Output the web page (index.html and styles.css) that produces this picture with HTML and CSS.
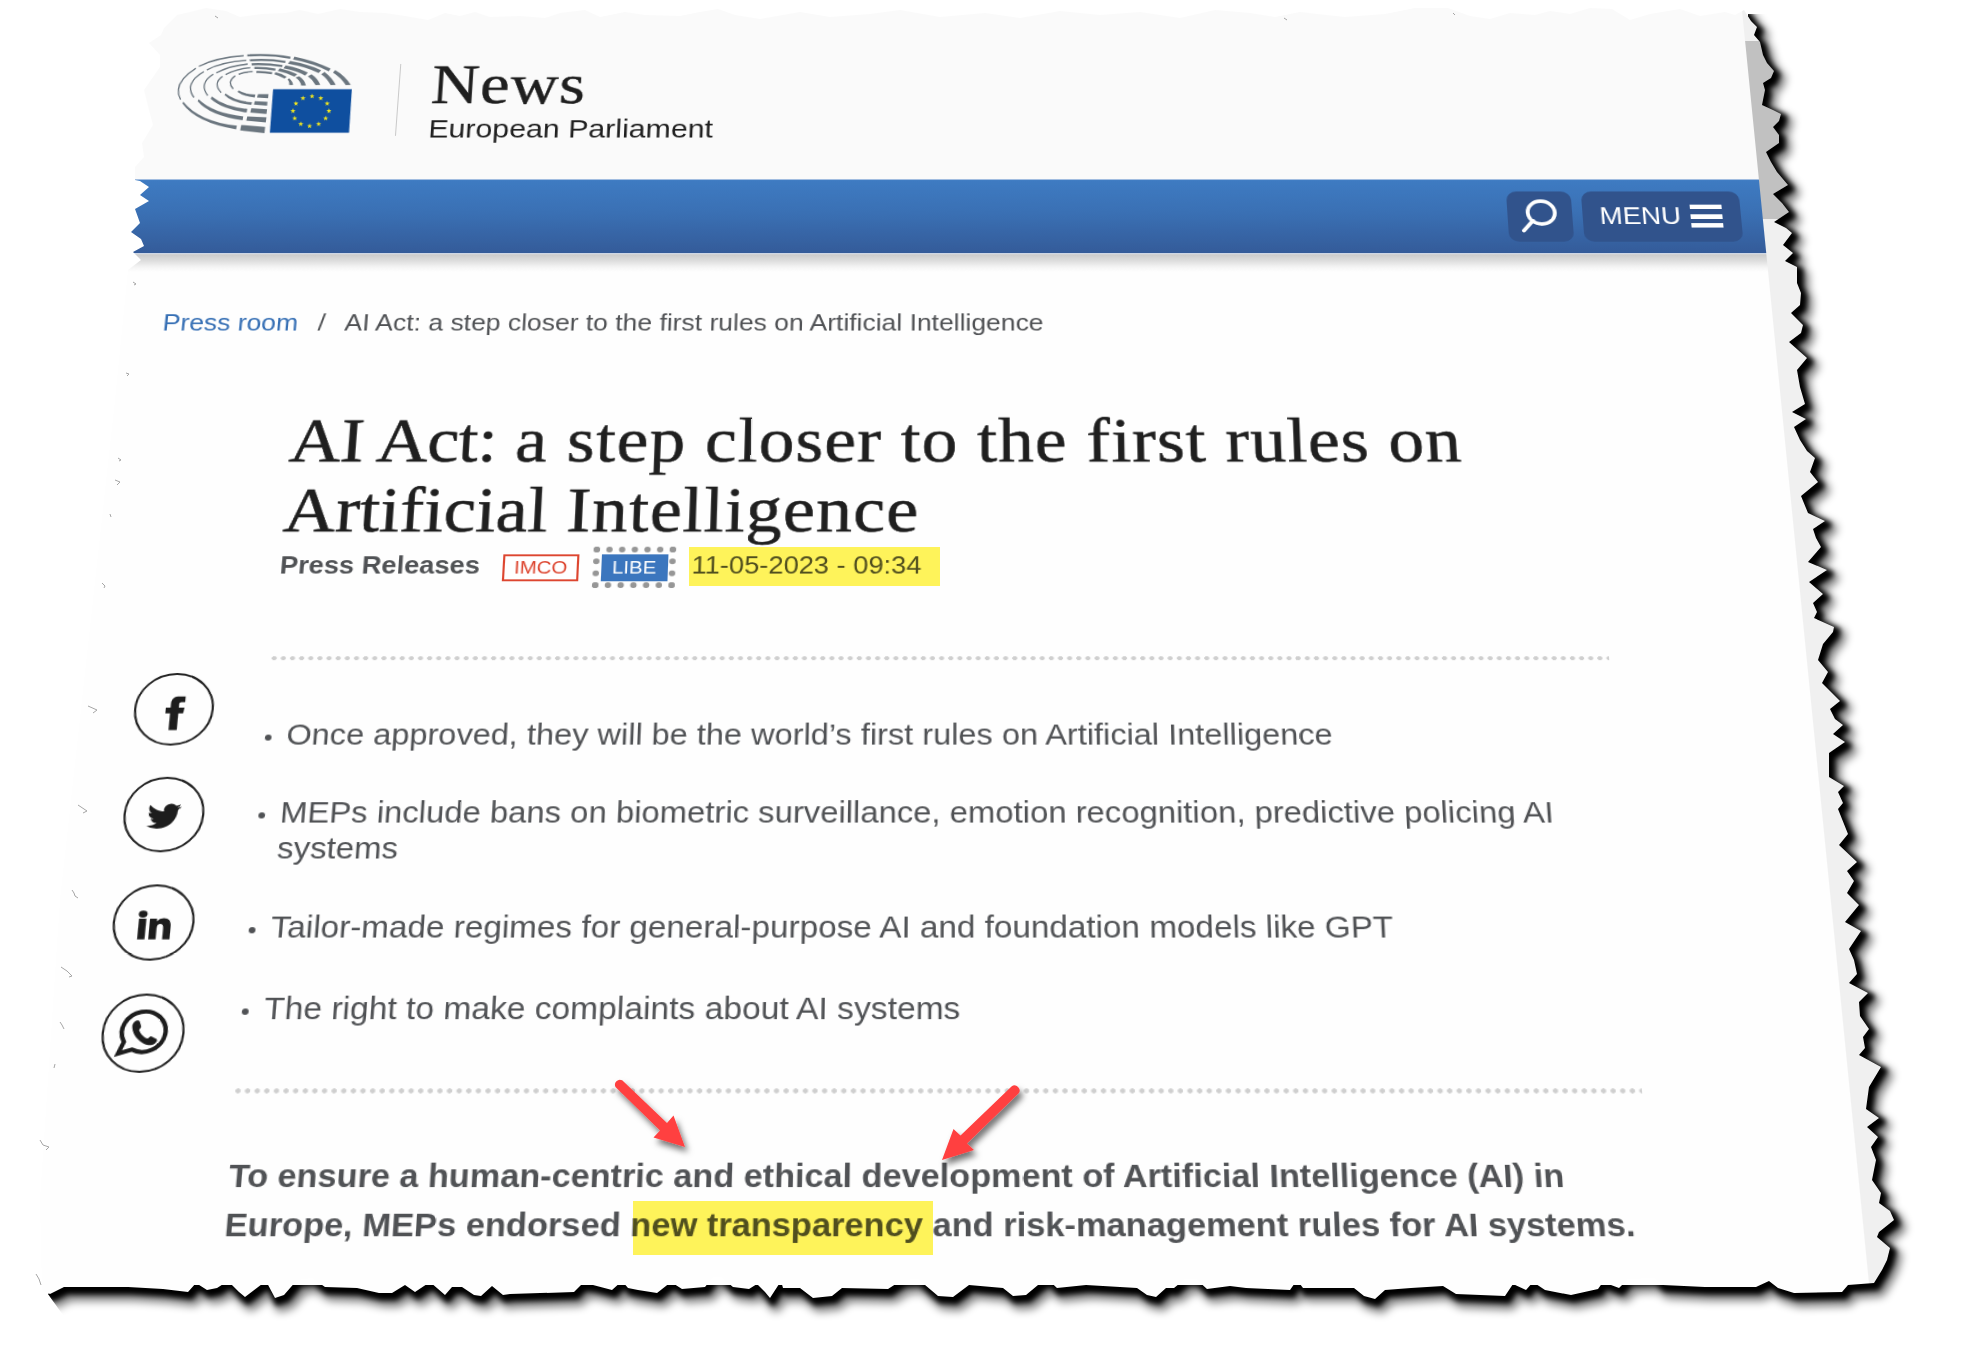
FILE: index.html
```html
<!DOCTYPE html>
<html lang="en">
<head>
<meta charset="utf-8">
<title>AI Act: a step closer to the first rules on Artificial Intelligence</title>
<link rel="stylesheet" href="styles.css">
</head>
<body>
<div class="stage">

<!-- torn paper outline and the shadow it casts -->
<svg class="torn" width="1965" height="1353" viewBox="0 0 1965 1353" aria-hidden="true">
  <defs>
    <path id="outline" d="M177,15L190,12 206,8 226,11 240,17 262,14 285,13 300,10 318,14 340,9 360,12 385,13 405,16 428,20 445,13 460,16 475,12 490,17 520,16 545,18 560,13 585,10 600,17 625,12 645,15 680,16 700,12 718,9 735,15 760,19 800,12 830,17 870,14 900,10 940,17 985,13 1020,18 1060,11 1100,15 1140,12 1180,18 1215,10 1250,13 1275,17 1300,12 1345,17 1385,14 1415,8 1448,8 1470,16 1490,19 1510,13 1535,15 1550,11 1570,14 1590,8 1612,9 1630,20 1650,14 1680,9 1700,16 1725,12 1735,15 1744,10 1751,21 1757,27 1754,35 1760,42 1763,55 1767,63 1774,71 1771,78 1763,83 1765,90 1762,105 1773,110 1781,114 1779,121 1773,127 1779,135 1779,143 1766,152 1771,162 1777,172 1788,185 1773,194 1782,203 1789,212 1774,222 1786,228 1792,233 1783,245 1793,253 1785,261 1797,267 1797,283 1801,293 1800,305 1791,313 1803,325 1801,333 1789,342 1798,350 1807,358 1797,370 1800,387 1805,404 1792,412 1806,419 1794,427 1800,440 1807,451 1815,458 1810,472 1818,482 1801,496 1808,513 1825,521 1813,529 1816,538 1821,547 1808,562 1827,570 1809,582 1823,594 1813,603 1817,612 1814,618 1834,627 1833,632 1823,644 1818,660 1828,672 1822,683 1840,701 1830,709 1835,719 1843,725 1833,734 1845,742 1829,753 1829,777 1844,786 1838,792 1843,803 1838,809 1848,834 1839,845 1857,862 1847,871 1854,881 1847,893 1859,905 1845,922 1861,931 1849,949 1854,960 1857,974 1849,983 1868,993 1859,1002 1860,1016 1869,1029 1863,1037 1865,1048 1859,1055 1881,1067 1869,1087 1866,1109 1879,1118 1867,1127 1878,1137 1871,1147 1876,1160 1872,1180 1881,1193 1879,1203 1890,1211 1894,1220 1879,1232 1877,1237 1890,1248 1887,1260 1882,1270 1874,1283 1848,1285 1842,1292 1794,1293 1778,1288 1769,1281 1756,1287 1705,1287 1663,1285 1654,1278 1628,1279 1619,1288 1603,1282 1598,1289 1571,1295 1545,1290 1533,1282 1526,1290 1513,1284 1505,1296 1456,1294 1443,1286 1411,1288 1385,1290 1375,1299 1364,1296 1354,1288 1303,1288 1297,1280 1290,1290 1246,1288 1230,1286 1207,1289 1196,1279 1185,1279 1174,1288 1166,1288 1156,1297 1147,1295 1137,1288 1086,1285 1057,1288 1047,1279 1038,1285 1026,1295 1013,1296 1003,1288 969,1285 953,1297 938,1296 918,1279 902,1280 888,1289 842,1288 832,1296 813,1298 800,1288 783,1288 781,1281 770,1298 765,1292 757,1284 749,1289 733,1287 721,1277 713,1277 705,1287 682,1289 671,1282 657,1293 638,1290 628,1288 622,1281 612,1290 593,1285 582,1284 574,1292 510,1294 503,1295 492,1286 481,1296 474,1295 462,1287 452,1287 445,1295 430,1282 415,1292 405,1285 392,1293 379,1293 357,1288 325,1287 312,1278 297,1280 284,1295 275,1298 266,1281 245,1297 239,1292 228,1281 217,1288 207,1290 196,1283 188,1292 163,1289 128,1287 64,1287 50,1294 42,1290 40,1200 60,900 115,400 128,270 141,260 133,252 144,246 141,239 131,232 140,223 135,209 149,201 140,195 149,187 140,181 135,180 135,167 144,157 142,143 153,125 149,110 144,90 160,67 160,55 149,43 161,35 164,28Z"/>
    <clipPath id="tear"><use href="#outline"/></clipPath>
    <filter id="soft" x="-5%" y="-5%" width="112%" height="112%"><feGaussianBlur stdDeviation="4.500"/></filter>
    <filter id="firm" x="-5%" y="-5%" width="112%" height="112%"><feGaussianBlur stdDeviation="2.400"/></filter>
    <filter id="drop" x="-30%" y="-30%" width="170%" height="170%"><feDropShadow dx="3" dy="5" stdDeviation="3" flood-color="#000" flood-opacity=".55"/></filter>
    <clipPath id="cast"><path d="M1748,14H1965V1353H90L48,1294 60,1285H1740Z"/></clipPath>
  </defs>
  <g clip-path="url(#cast)">
    <use href="#outline" class="shade shade-soft" filter="url(#soft)"/>
    <use href="#outline" class="shade shade-firm" filter="url(#firm)"/>
  </g>
</svg>

<div class="sheet">
<div class="page">
  <div class="view">
    <header class="masthead">
      <svg class="logo" viewBox="0 0 570 276" preserveAspectRatio="none" aria-hidden="true">
        <g transform="matrix(1 0 .092 1 0 0)">
          <g class="arc-thin">
            <path d="M33,156Q7,108 78,62M87,56Q140,29 221,24M73,150Q42,107 102,72M111,67Q155,43 229,38M114,144Q86,108 130,80M139,76Q180,54 233,49M154,135Q128,108 158,86M167,81Q200,63 241,60M190,124Q170,103 196,84M206,80Q225,73 248,72"/>
          </g>
          <g class="arc-mid">
            <path d="M232,23Q300,18 361,30M240,38Q295,34 346,43M245,50Q290,48 337,55M253,61Q285,60 316,66M259,73Q282,72 306,77"/>
          </g>
          <g class="arc-fill">
            <path d="M373,27Q430,38 481,63L476,71Q430,47 369,35ZM495,67Q525,85 541,112L526,113Q512,90 488,75ZM41,162Q90,222 201,234L199,245Q80,225 39,168ZM214,232L285,238 283,256 211,248Z"/>
            <path d="M360,40Q415,50 453,68L445,76Q410,58 354,48ZM463,73Q485,90 496,112L481,113Q470,92 453,80ZM87,155Q130,197 220,206L218,218Q120,204 84,161ZM232,206L289,209 287,224 229,219Z"/>
            <path d="M347,53Q390,62 413,75L405,84Q380,69 340,62ZM424,80Q442,92 450,112L436,113Q429,98 413,86ZM126,147Q165,178 232,184L230,195Q155,184 123,154ZM244,182L291,185 289,199 241,195Z"/>
            <path d="M329,62Q360,69 381,80L373,87Q350,76 323,70ZM387,86Q404,98 407,114L393,114Q390,99 376,90ZM167,138Q195,160 246,164L244,172Q185,165 164,142ZM254,161L292,163 291,174 252,171Z"/>
            <path d="M316,74Q335,78 350,88L343,93Q330,85 313,80ZM357,92Q370,103 368,113L357,112Q358,100 352,96ZM206,129Q225,140 256,141L254,150Q220,146 203,133ZM264,140L295,140 294,152 261,150Z"/>
          </g>
          <path class="flag" d="M309,125H544L534,255H299Z"/>
          <defs><path id="star" d="M0,-8L1.9,-2.6 7.6,-2.5 3.1,1 4.7,6.5 0,3.2 -4.7,6.5 -3.1,1 -7.6,-2.5 -1.9,-2.6Z"/></defs>
          <g class="stars">
            <use href="#star" x="425" y="146"/><use href="#star" x="451" y="152"/><use href="#star" x="470" y="168"/><use href="#star" x="475" y="190"/><use href="#star" x="465" y="212"/><use href="#star" x="444" y="229"/><use href="#star" x="417" y="235"/><use href="#star" x="391" y="229"/><use href="#star" x="373" y="212"/><use href="#star" x="368" y="190"/><use href="#star" x="377" y="168"/><use href="#star" x="398" y="152"/>
          </g>
        </g>
      </svg>
      <div class="divider"></div>
      <div class="brand">
        <div class="brand-name">News</div>
        <div class="brand-sub">European Parliament</div>
      </div>
    </header>

    <nav class="bar">
      <a class="btn btn-search" aria-label="Search">
        <svg width="36" height="38" viewBox="0 0 36 38"><ellipse cx="20" cy="15" rx="13.2" ry="13"/><path d="M11.500,24L2,35.500"/></svg>
      </a>
      <a class="btn btn-menu"><span>MENU</span><span class="lines"><i></i><i></i><i></i></span></a>
    </nav>

    <main class="main">
      <div class="crumbs"><a>Press room</a><span class="slash">/</span><span>AI Act: a step closer to the first rules on Artificial Intelligence</span></div>
      <div class="columns">
        <aside class="social">
          <a class="round"><svg viewBox="-37 -37 74 74"><path d="M10-14v6.200H6.800c-2 0-2.500 1-2.500 2.600V-2H9.800L9 4.200H4.300V22h-8V4.200h-4.600V-2h4.600v-4C-3.700-11.500-.8-14 4.500-14z"/></svg></a>
          <a class="round"><svg viewBox="-37 -37 74 74"><path transform="translate(-16.300 -13.900) scale(1.350 1.330)" d="M23.953 4.570a10 10 0 01-2.825.775 4.958 4.958 0 002.163-2.723c-.951.555-2.005.959-3.127 1.184a4.920 4.920 0 00-8.384 4.482C7.690 8.095 4.067 6.130 1.640 3.162a4.822 4.822 0 00-.666 2.475c0 1.710.87 3.213 2.188 4.096a4.904 4.904 0 01-2.228-.616v.06a4.923 4.923 0 003.946 4.827 4.996 4.996 0 01-2.212.085 4.936 4.936 0 004.604 3.417 9.867 9.867 0 01-6.102 2.105c-.39 0-.779-.023-1.170-.067a13.995 13.995 0 007.557 2.209c9.053 0 13.998-7.496 13.998-13.985 0-.21 0-.42-.015-.63A9.935 9.935 0 0024 4.590z"/></svg></a>
          <a class="round"><svg viewBox="-37 -37 74 74"><ellipse cx="-11" cy="-8.700" rx="4.200" ry="3.600"/><path d="M-14.500-4h7V17h-7zM-4-4H2.700V-1.500Q5-4.500 9-4.500C14-4.500 16.200-1.500 16.200 4V17H9.200V5.500Q9.200 1.200 6.200 1.200Q3 1.200 3 5.500V17H-4z"/></svg></a>
          <a class="round"><svg viewBox="-37 -37 74 74"><path class="bubble" d="M-17.500,9A20.500,20 0 1 1 -9.500,16.500L-22,20.500Z"/><path d="M-11-8c1-4 5-5.500 6.500-3.200l1.800 4.700c.4 1.800-2 2.900-1.500 4.100 1.800 3.800 4.200 6.200 8 7.900 1.500.4 2.500-2.500 4.200-1.900l4.700 2.400c2 1.500-.9 5.800-4.900 6.300C-1.200 12.300-11.500 2-11-8z"/></svg></a>
        </aside>
        <article class="article">
          <h1 class="title"><span class="tight">AI Act:</span> a step closer to the first rules on <span class="snug">Artificial</span> Intelligence</h1>
          <div class="meta">
            <b class="kind">Press Releases</b>
            <span class="tag tag-imco">IMCO</span>
            <span class="focus"><span class="tag tag-libe">LIBE</span></span>
            <time class="date">11-05-2023 - 09:34</time>
          </div>
          <div class="dots dots-top"></div>
          <ul class="facts">
            <li>Once approved, they will be the world’s first rules on Artificial Intelligence</li>
            <li>MEPs include bans on biometric surveillance, emotion recognition, predictive policing AI systems</li>
            <li>Tailor-made regimes for general-purpose AI and foundation models like GPT</li>
            <li>The right to make complaints about AI systems</li>
          </ul>
          <div class="dots dots-bottom"></div>
          <p class="lead">To ensure a human-centric and ethical development of Artificial Intelligence (AI) in Europe, MEPs endorsed new transparency and risk-management rules for AI systems.</p>
        </article>
      </div>
    </main>
  </div>
  <div class="scroll"><div class="thumb"></div></div>
</div>
</div>

<!-- marker highlights, arrows and edge flecks -->
<div class="marker marker-date"></div>
<div class="marker marker-lead"></div>
<svg class="notes" width="1965" height="1353" viewBox="0 0 1965 1353" aria-hidden="true">
  <g class="arrow" filter="url(#drop)">
    <path d="M622.200,1080.300L667,1123 673.500,1115.500 685,1147 653.500,1137.500 660,1130.500 615.500,1087A5,5 0 0 1 622.200,1080.300Z"/>
    <path d="M1018.500,1093.500L967,1143.500 974,1150 942,1160 953.500,1129 960.500,1135.500 1011.500,1086.500A5,5 0 0 1 1018.500,1093.500Z"/>
  </g>
  <path class="fleck" d="M133,282l3,2-2,1M126,373l3,1-2,2M118,458l3,2-2,1M115,480l5,2-3,3M110,514l1,3M102,583l3,3-1,2M88,706l9,4-4,3M78,805l9,6-4,2M72,890l2,3 1,3 3,2M61,967l6,4 5,5-3,1M60,1022l2,3 2,4M55,1064l-1,4M40,1140l3,5 6,2-3,3M36,1274l3,5 2,6M215,16l3,2M1284,18l3,2M1453,13l2,2"/>
</svg>
</div>
</body>
</html>
```

FILE: styles.css
```css
* { box-sizing: border-box; }

body {
  margin: 0;
  background: #fff;
  font-family: "Liberation Sans", Arial, sans-serif;
  color: #505255;
}

.stage {
  position: relative;
  width: 1965px;
  height: 1353px;
  overflow: hidden;
}

.torn, .notes {
  position: absolute;
  left: 0;
  top: 0;
}

.shade { fill: #000; stroke: #000; stroke-linejoin: round; }
.shade-firm { stroke-width: 7px; transform: translate(3px, 4px); }
.shade-soft { stroke-width: 12px; opacity: .5; transform: translate(6px, 8px); }

.sheet {
  position: absolute;
  inset: 0;
  clip-path: url(#tear);
}

/* the sheet is tilted back: verticals converge far above the page */
.page {
  display: flex;
  width: 1801px;
  height: 1400px;
  transform-origin: 0 0;
  transform: matrix3d(1, 0, 0, 0, -.10563, .834, 0, -.00010845, 0, 0, 1, 0, 0, 0, 0, 1);
}

.view { width: 1741px; background: #fefefe; }

.scroll { width: 60px; background: #f0f0f0; padding-top: 48.900px; }
.thumb { height: 206px; background: #c1c1c1; }

/* masthead */
.masthead {
  display: flex;
  align-items: flex-start;
  height: 210.400px;
  padding: 57.200px 0 0 175px;
  background: #fafafa;
}
.logo { width: 188.800px; height: 107.700px; overflow: visible; }
.arc-thin, .arc-mid { fill: none; stroke: #6b767f; }
.arc-thin { stroke-width: 4px; }
.arc-mid { stroke-width: 6.500px; }
.arc-fill { fill: #6b767f; }
.flag { fill: #0f4f9f; }
.stars { fill: #f3e71d; }
.divider { width: 1.600px; height: 84px; margin: 18.800px 0 0 41px; background: #c9c9c9; }
.brand { margin: 9.700px 0 0 31px; white-space: nowrap; }
.brand-name {
  font: 65.500px/66px "Liberation Serif", Georgia, serif;
  letter-spacing: 1px;
  -webkit-text-stroke: .5px #1f1f1f;
  color: #1f1f1f;
}
.brand-sub { margin-top: 2.300px; font-size: 29.800px; line-height: 34px; color: #1f1f1f; }

/* blue bar */
.bar {
  position: relative;
  display: flex;
  justify-content: flex-end;
  gap: 10.500px;
  height: 83.300px;
  padding: 12.300px 21px 0 0;
  background: linear-gradient(#3e7bc2, #3a70b4 45%, #345b99);
  border-top: 1px solid #8fb0da;
}
.bar::after {
  content: "";
  position: absolute;
  left: 0;
  right: 0;
  top: 84px;
  height: 20px;
  background: linear-gradient(#cacaca, #dcdcdc 35%, #f6f6f6 75%, #fefefe);
}
.btn {
  display: flex;
  align-items: center;
  height: 57px;
  border-radius: 10px;
  background: #31538c;
  color: #fff;
}
.btn-search { width: 63px; justify-content: center; }
.btn-search svg { fill: none; stroke: #fff; stroke-width: 3.800px; stroke-linecap: round; }
.btn-menu { width: 154px; padding-left: 16.500px; gap: 9px; font-size: 26.900px; }
.lines { display: flex; flex-direction: column; gap: 5.700px; }
.lines i { width: 31.500px; height: 4.700px; background: #fff; }

/* breadcrumb */
.main { padding-top: 61.900px; }
.crumbs {
  display: flex;
  padding-left: 195.500px;
  font-size: 25.420px;
  line-height: 30px;
  white-space: nowrap;
}
.crumbs a { color: #3770b5; }
.slash { margin: 0 18.500px 0 19px; }

.columns {
  display: grid;
  grid-template-columns: 122.500px 1231.600px;
  margin-top: 74.600px;
  padding-left: 204.500px;
}

/* share buttons */
.social { display: flex; flex-direction: column; gap: 31px; padding-top: 281.400px; }
.round {
  width: 73.600px;
  height: 73.600px;
  border: 2px solid #222;
  border-radius: 50%;
}
.round svg { display: block; width: 100%; height: 100%; overflow: visible; fill: #1d1d1d; }
.round .bubble { fill: none; stroke: #1d1d1d; stroke-width: 4.200px; }

/* article */
.title {
  position: relative;
  top: 2.500px;
  margin: 0;
  font: 67.500px/74.800px "Liberation Serif", Georgia, serif;
  letter-spacing: .98px;
  -webkit-text-stroke: .6px #1f1f1f;
  color: #1f1f1f;
}
.tight { letter-spacing: -.7px; }
.snug { letter-spacing: 0; }
.meta {
  display: flex;
  align-items: center;
  height: 42.400px;
  margin-top: 2.800px;
  font-size: 25.400px;
  line-height: 30px;
  white-space: nowrap;
}
.kind, .date { padding-bottom: 5.500px; }
.kind { width: 208px; padding-left: .5px; }
.tag { display: block; height: 27.700px; font-size: 19px; line-height: 27px; text-align: center; }
.tag-imco { width: 71px; border: 2px solid #dd4630; color: #dd4630; line-height: 24px; background: #fff; }
.focus { margin: 0 15px 0 13px; padding: 1.500px; border: 6px dotted #969696; }
.tag-libe { width: 62px; background: #3b76be; color: #fff; }

.dots {
  height: 4.500px;
  background: radial-gradient(ellipse 2.400px 2.400px at 2.400px 50%, #cfcfcf 85%, transparent) 0 0 / 8.430px 100% repeat-x;
}
.dots-top { margin-top: 69.900px; }
.dots-bottom { margin-top: 56.600px; }

.facts {
  display: flex;
  flex-direction: column;
  gap: 42px;
  margin: 58px 0 0;
  padding: 0 0 0 19.500px;
  list-style: none;
  font-size: 29.700px;
  line-height: 34.700px;
}
.facts li { position: relative; }
.facts li::before {
  content: "";
  position: absolute;
  left: -20px;
  top: 16.500px;
  width: 6px;
  height: 6px;
  border-radius: 50%;
  background: #505255;
}
.lead {
  margin: 53.400px 0 0;
  padding-left: .8px;
  font-size: 29.690px;
  font-weight: bold;
  line-height: 43.800px;
}

/* annotations lying over the sheet */
.marker { position: absolute; background: #fff45a; mix-blend-mode: multiply; }
.marker-date { left: 689px; top: 547px; width: 251px; height: 39px; }
.marker-lead { left: 633px; top: 1201px; width: 300px; height: 54px; }
.arrow { fill: #ff4040; }
.fleck { fill: none; stroke: #a5a5a5; stroke-width: 1px; }
```
